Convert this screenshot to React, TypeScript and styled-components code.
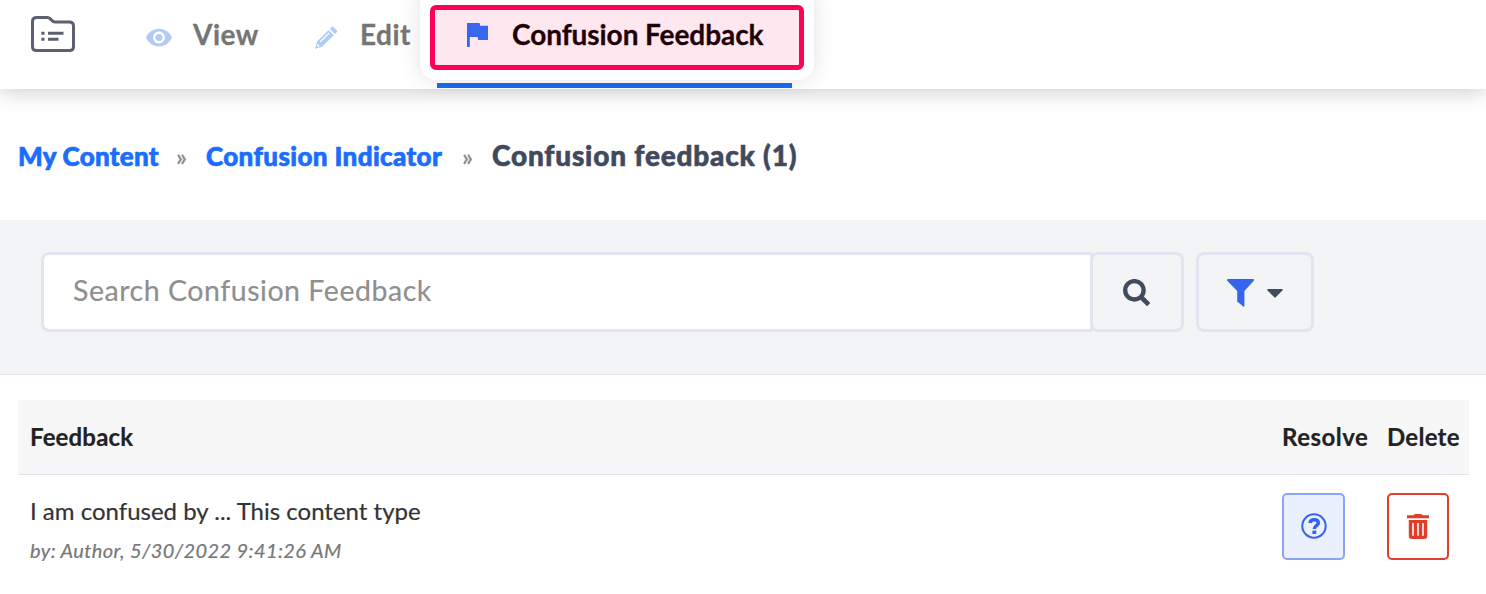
import React from 'react';
import styled, { createGlobalStyle } from 'styled-components';

const Global = createGlobalStyle`
  *, *::before, *::after { box-sizing: border-box; }
  body { margin: 0; background: #fff; color: #222; font-family: Lato, "Liberation Sans", sans-serif; }
  svg { display: block; flex: none; }
`;

const Page = styled.div`
  height: 594px;
  overflow: hidden;
`;

const TopBar = styled.header`
  position: relative;
  display: flex;
  height: 89px;
  padding-left: 31px;
  background: #fff;
  box-shadow: 0 3px 20px rgba(0, 0, 0, 0.2);
`;

const FolderMark = styled.div`
  width: 115px;
  padding-top: 16px;
`;

const Tab = styled.a<{ $width: number; $gap: number; $top: number }>`
  display: flex;
  align-items: flex-start;
  gap: ${p => p.$gap}px;
  width: ${p => p.$width}px;
  padding-top: ${p => p.$top}px;
  color: #757575;
`;

const TabLabel = styled.span<{ $spacing: number; $lift: number }>`
  font-size: 28px;
  font-weight: 700;
  line-height: 34px;
  margin-top: -${p => p.$lift}px;
  letter-spacing: ${p => p.$spacing}px;
  white-space: nowrap;
  -webkit-text-stroke: 0.3px currentColor;
`;

const ActiveTab = styled.a`
  position: relative;
  width: 355px;
  height: 88px;
  margin-left: 6px;
  padding: 23px 0 0 30px;
  border-bottom: 5px solid #186bf2;
  color: #1f0208;
`;

const Halo = styled.span`
  position: absolute;
  top: -14px;
  left: -17px;
  width: 394px;
  height: 94px;
  border-radius: 16px;
  background: #fff;
  box-shadow: 0 0 22px rgba(0, 0, 0, 0.12);
`;

const Outline = styled.span`
  position: absolute;
  top: 5px;
  left: -7px;
  width: 374px;
  height: 65px;
  border: 5px solid #ff0059;
  border-radius: 6px;
  background: #ffe7ef;
`;

const ActiveContent = styled.span`
  position: relative;
  display: flex;
  align-items: flex-start;
  gap: 24px;
`;

const Breadcrumbs = styled.nav`
  display: flex;
  align-items: baseline;
  height: 131px;
  padding: 49px 0 0 18px;
  white-space: nowrap;
`;

const CrumbLink = styled.a<{ $width: number; $spacing: number }>`
  width: ${p => p.$width}px;
  color: #1a6dff;
  font-size: 26px;
  font-weight: 900;
  line-height: 34px;
  letter-spacing: ${p => p.$spacing}px;
  -webkit-text-stroke: 0.7px currentColor;
`;

const Separator = styled.span`
  width: 30px;
  color: #8e8e8e;
  font-size: 24px;
  font-weight: 700;
`;

const CurrentCrumb = styled.h1`
  margin: 0;
  color: #3f4a5c;
  font-size: 28px;
  font-weight: 900;
  line-height: 34px;
  letter-spacing: 0.8px;
  -webkit-text-stroke: 0.6px currentColor;
`;

const SearchBand = styled.section`
  display: flex;
  height: 155px;
  padding: 32px 0 0 41px;
  border-bottom: 1px solid #e0e2ee;
  background: #f3f4f6;
`;

const SearchField = styled.div`
  width: 1052px;
  height: 80px;
  padding: 18px 0 0 29px;
  border: 3px solid #e2e4ef;
  border-radius: 8px 0 0 8px;
  background: #fff;
  color: #8f8f8f;
  font-size: 28.5px;
  line-height: 34px;
  letter-spacing: 0.54px;
  white-space: nowrap;
  -webkit-text-stroke: 0.2px currentColor;
`;

const ToolButton = styled.button<{ $width: number; $margin: number; $gap?: number }>`
  display: flex;
  align-items: center;
  justify-content: center;
  gap: ${p => p.$gap ?? 0}px;
  width: ${p => p.$width}px;
  height: 80px;
  margin: 0 0 0 ${p => p.$margin}px;
  padding: 2px 0 0;
  border: 3px solid #e2e4ef;
  border-radius: 8px;
  background: #f3f4f6;
`;

const Table = styled.section`
  width: 1451px;
  margin: 25px 0 0 18px;
`;

const HeadRow = styled.div`
  display: grid;
  grid-template-columns: 1252px 105px 1fr;
  height: 75px;
  padding: 20px 0 0 12px;
  border-bottom: 1px solid #e0e2ee;
  background: #f7f7f7;
`;

const HeadCell = styled.span<{ $spacing: number }>`
  font-size: 24px;
  font-weight: 700;
  line-height: 34px;
  letter-spacing: ${p => p.$spacing}px;
  white-space: nowrap;
  -webkit-text-stroke: 0.2px currentColor;
`;

const BodyRow = styled.div`
  display: grid;
  grid-template-columns: 1252px 105px 1fr;
  padding: 18px 0 0 12px;
`;

const Message = styled.div`
  margin-top: -1px;
  color: #333;
  font-size: 24px;
  line-height: 38px;
  -webkit-text-stroke: 0.2px currentColor;
`;

const Byline = styled.div`
  margin-top: 1px;
  color: #777;
  font-size: 20px;
  font-style: italic;
  line-height: 38px;
  letter-spacing: 0.4px;
  -webkit-text-stroke: 0.2px currentColor;
`;

const RowAction = styled.button<{ $width: number; $line: string; $fill: string }>`
  display: flex;
  align-items: center;
  justify-content: center;
  width: ${p => p.$width}px;
  height: 67px;
  padding: 0;
  border: 2px solid ${p => p.$line};
  border-radius: 5px;
  background: ${p => p.$fill};
`;

const FolderIcon = () => (
  <svg width="44" height="36" viewBox="0 0 44 36" fill="none" stroke="#5d6070" strokeWidth="3">
    <path d="M5.5 1.500H16.500C20.500 1.500 20 6 24 6H38.500Q42.500 6 42.500 10V30.500Q42.500 34.500 38.500 34.500H5.500Q1.500 34.500 1.500 30.500V5.500Q1.500 1.500 5.500 1.500Z" />
    <path d="M10.300 17.300h3.200M17 17.300h15.500M10.300 23.200h3.200M17 23.200h10.500" />
  </svg>
);

const EyeIcon = () => (
  <svg width="26" height="19" viewBox="1 4.25 22 15.5" fill="#b1cbf5">
    <path d="M12 4.500C7 4.500 2.730 7.610 1 12c1.730 4.390 6 7.500 11 7.500s9.270-3.110 11-7.500c-1.730-4.390-6-7.500-11-7.500zM12 17c-2.760 0-5-2.240-5-5s2.240-5 5-5 5 2.240 5 5-2.240 5-5 5zm0-8c-1.660 0-3 1.340-3 3s1.340 3 3 3 3-1.340 3-3-1.340-3-3-3z" />
  </svg>
);

const PencilIcon = () => (
  <svg width="23" height="23" viewBox="0 0 23 23">
    <path fill="#b1cbf5" d="M16.700.900Q17.500 0 18.400.900L21.800 4.300Q22.800 5.300 21.800 6.200L19.900 8.100L14.800 2.900ZM13.600 4.100L18.800 9.300L7.300 20.500L.500 22.700Q0 22.800.100 22.200L2 15.600Z" />
    <path stroke="#fff" strokeWidth="1.300" d="M5.200 15.700L14.200 7" />
    <path fill="#fff" d="M2.700 17.400L3.200 19.300L5.300 19.900L3 20.700L1.900 19.700Z" />
  </svg>
);

const FlagIcon = () => (
  <svg width="21" height="24" viewBox="5 4 15 17" preserveAspectRatio="none" fill="#3a66ef">
    <path d="M14.400 6L14 4H5v17h2v-7h5.600l.400 2h7V6z" />
  </svg>
);

const SearchIcon = () => (
  <svg width="28" height="28" viewBox="0 0 28 28" fill="none" stroke="#404b5d">
    <circle cx="11.400" cy="11.300" r="9.200" strokeWidth="4.300" />
    <path d="M17.500 17.500L25.700 25.700" strokeWidth="4.600" />
  </svg>
);

const FilterIcon = () => (
  <svg width="27" height="28" viewBox="0 0 27 28" fill="#3565f0">
    <path d="M.600 0H26.400Q27.300.700 26.800 1.700L17.400 12V27.200Q17 28 16.200 27.400L10.200 22.500V12L.200 1.700Q-.300.700.600 0Z" />
  </svg>
);

const CaretIcon = () => (
  <svg width="16" height="9" viewBox="0 0 16 9" fill="#404b5d">
    <path d="M.800 0H15.200Q16.200.500 15.400 1.500L8.700 8.300Q8 9 7.300 8.300L.600 1.500Q-.200.500.800 0Z" />
  </svg>
);

const QuestionIcon = () => (
  <svg width="26" height="28" viewBox="0 0 26 28" fill="none" stroke="#3565f0">
    <circle cx="13" cy="13" r="11.700" strokeWidth="2" />
    <path d="M9 10C9.300 7.700 10.900 6.800 13.100 6.800C15.500 6.800 17.300 7.900 17.300 9.900C17.300 12.700 13.300 12.600 13.300 15.900" strokeWidth="3.600" />
    <path d="M11.400 19.300h3.900" strokeWidth="3.400" />
  </svg>
);

const TrashIcon = () => (
  <svg width="22" height="25" viewBox="0 0 22 25">
    <path fill="#e23d28" d="M0 1.300H6.500L7.800 0H14.200L15.500 1.300H22V4.200H0ZM1.800 6H20.200V22Q20.200 25 17.200 25H4.800Q1.800 25 1.800 22Z" />
    <path stroke="#fff" strokeWidth="1.600" d="M6 9V21.800M11 9V21.800M16 9V21.800" />
  </svg>
);

export default function App() {
  return (
    <Page>
      <Global />
      <TopBar>
        <FolderMark><FolderIcon /></FolderMark>
        <Tab $width={169} $gap={21} $top={28}>
          <EyeIcon />
          <TabLabel $spacing={0.5} $lift={11}>View</TabLabel>
        </Tab>
        <Tab $width={116} $gap={22} $top={26}>
          <PencilIcon />
          <TabLabel $spacing={0.5} $lift={9}>Edit</TabLabel>
        </Tab>
        <ActiveTab>
          <Halo />
          <Outline />
          <ActiveContent>
            <FlagIcon />
            <TabLabel $spacing={-0.07} $lift={6}>Confusion Feedback</TabLabel>
          </ActiveContent>
        </ActiveTab>
      </TopBar>
      <Breadcrumbs>
        <CrumbLink $width={158} $spacing={0.25}>My Content</CrumbLink>
        <Separator>»</Separator>
        <CrumbLink $width={256} $spacing={0.38}>Confusion Indicator</CrumbLink>
        <Separator>»</Separator>
        <CurrentCrumb>Confusion feedback (1)</CurrentCrumb>
      </Breadcrumbs>
      <SearchBand>
        <SearchField>Search Confusion Feedback</SearchField>
        <ToolButton $width={94} $margin={-3} aria-label="Search"><SearchIcon /></ToolButton>
        <ToolButton $width={118} $margin={12} $gap={13} aria-label="Filter"><FilterIcon /><CaretIcon /></ToolButton>
      </SearchBand>
      <Table>
        <HeadRow>
          <HeadCell $spacing={0.15}>Feedback</HeadCell>
          <HeadCell $spacing={0.5}>Resolve</HeadCell>
          <HeadCell $spacing={0.25}>Delete</HeadCell>
        </HeadRow>
        <BodyRow>
          <div>
            <Message>I am confused by ... This content type</Message>
            <Byline>by: Author, 5/30/2022 9:41:26 AM</Byline>
          </div>
          <RowAction $width={63} $line="#8aa5f5" $fill="#eaf0fd" aria-label="Resolve"><QuestionIcon /></RowAction>
          <RowAction $width={62} $line="#e23d28" $fill="#fff" aria-label="Delete"><TrashIcon /></RowAction>
        </BodyRow>
      </Table>
    </Page>
  );
}
